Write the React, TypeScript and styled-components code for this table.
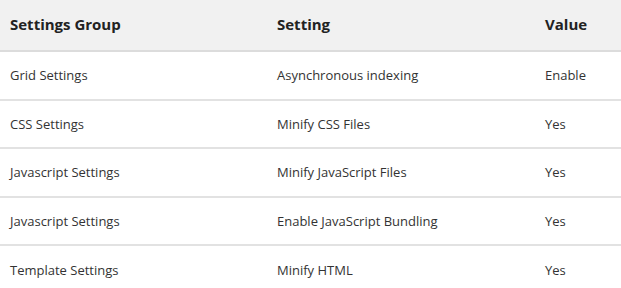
import React from "react";
import styled, { createGlobalStyle } from "styled-components";

const Global = createGlobalStyle`
  html, body { margin: 0; padding: 0; background: #fff; }
  body { font-family: "Open Sans", "Noto Sans", sans-serif; }
`;

const Table = styled.table`
  width: 621px;
  border-collapse: collapse;
  table-layout: fixed;
`;

const HeadRow = styled.tr`
  background: #f1f1f1;
  border-bottom: 2px solid #dcdcdc;
`;

const Th = styled.th<{ $w: number }>`
  width: ${(p) => p.$w}px;
  height: 51px;
  padding: 0 0 2px 10px;
  text-align: left;
  font-size: 15px;
  font-weight: 700;
  color: #222;
  box-sizing: border-box;
`;

const Row = styled.tr`
  border-bottom: 2px solid #e2e2e2;
  &:last-child { border-bottom: none; }
`;

const Td = styled.td`
  height: 48.6px;
  padding: 0 0 0 10px;
  font-size: 13px;
  color: #333;
  box-sizing: border-box;
`;

const rows = [
  ["Grid Settings", "Asynchronous indexing", "Enable"],
  ["CSS Settings", "Minify CSS Files", "Yes"],
  ["Javascript Settings", "Minify JavaScript Files", "Yes"],
  ["Javascript Settings", "Enable JavaScript Bundling", "Yes"],
  ["Template Settings", "Minify HTML", "Yes"],
];

export default function App() {
  return (
    <>
      <Global />
      <Table>
        <thead>
          <HeadRow>
            <Th $w={267}>Settings Group</Th>
            <Th $w={268}>Setting</Th>
            <Th $w={86}>Value</Th>
          </HeadRow>
        </thead>
        <tbody>
          {rows.map((r, i) => (
            <Row key={i}>
              {r.map((c, j) => (
                <Td key={j}>{c}</Td>
              ))}
            </Row>
          ))}
        </tbody>
      </Table>
    </>
  );
}
